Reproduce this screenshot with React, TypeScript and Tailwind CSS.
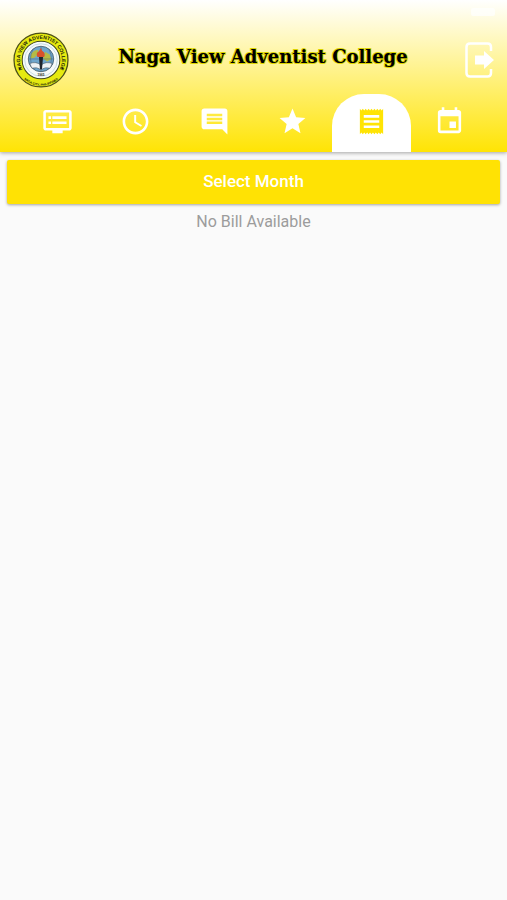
import React from 'react';
import { MdAccessTime, MdComment, MdDvr, MdEvent, MdStar } from 'react-icons/md';

const tabs = [
  { id: 'news', label: 'News', icon: MdDvr },
  { id: 'attendance', label: 'Attendance', icon: MdAccessTime },
  { id: 'messages', label: 'Messages', icon: MdComment },
  { id: 'grades', label: 'Grades', icon: MdStar },
  { id: 'billing', label: 'Billing', icon: BillIcon },
  { id: 'calendar', label: 'Calendar', icon: MdEvent },
];

function BillIcon({ className }: { className?: string }) {
  return (
    <svg viewBox="0 0 24 24" className={className} fill="currentColor" aria-hidden="true">
      <path
        fillRule="evenodd"
        d="M3 2.200l1.125 1.300 1.125-1.300 1.125 1.300 1.125-1.300 1.125 1.300 1.125-1.300 1.125 1.300 1.125-1.300 1.125 1.300 1.125-1.300 1.125 1.300 1.125-1.300 1.125 1.300 1.125-1.300 1.125 1.300L21 2.200v19.600l-1.125-1.300-1.125 1.300-1.125-1.300-1.125 1.300-1.125-1.300-1.125 1.300-1.125-1.300-1.125 1.300-1.125-1.300-1.125 1.300-1.125-1.300-1.125 1.300-1.125-1.300-1.125 1.300-1.125-1.300L3 21.800zM6 7v2h12V7zM6 11v2h12v-2zM6 15v2h12v-2z"
      />
    </svg>
  );
}

function SchoolSeal() {
  return (
    <svg viewBox="0 0 110 110" className="h-14 w-14 shrink-0" aria-hidden="true">
      <defs>
        <path id="seal-top" d="M21.600 78.400A41 41 0 1 1 88.400 78.400" />
        <path id="seal-bottom" d="M12 81A50 50 0 0 0 98 81" />
      </defs>
      <circle cx="55" cy="55" r="53" fill="#e6ea10" stroke="#4d5018" strokeWidth="2.500" />
      <circle cx="55" cy="55" r="37" fill="#f6fafa" stroke="#41491f" strokeWidth="2" />
      <circle cx="55" cy="55" r="32" fill="none" stroke="#b9d3dd" strokeWidth="1.500" />
      <circle cx="55" cy="53" r="25" fill="#6ea6cc" stroke="#3c5260" strokeWidth="1.500" />
      <path d="M36 42q8-9 14-6l-2 9-7 6-7 1zM63 39l9 5 3 9-8 5-8-6z" fill="#b4bb45" />
      <path d="M31 53h48M55 29v48M39 35q-9 18 0 35M71 35q9 18 0 35" fill="none" stroke="#45617c" />
      <path d="M33 62q12-5 22 3 10-8 22-3l-4 9q-10-3-18 3-8-6-18-3z" fill="#eef3f5" stroke="#33424d" />
      <path d="M51 49h8l-2 24h-4z" fill="#20262e" />
      <path d="M48 49q-4-8 3-11l4-7 2 6q8 5 4 12z" fill="#d8512c" />
      <circle cx="13" cy="72" r="1.800" fill="#1c1d08" />
      <circle cx="97" cy="72" r="1.800" fill="#1c1d08" />
      <g fill="#1c1d08" fontFamily="Liberation Sans" fontWeight="bold" textAnchor="middle">
        <text fontSize="10">
          <textPath href="#seal-top" startOffset="50%">NAGA VIEW ADVENTIST COLLEGE</textPath>
        </text>
        <text fontSize="6">
          <textPath href="#seal-bottom" startOffset="50%">NAGA CITY, PHILIPPINES</textPath>
        </text>
        <text x="55" y="86" fontSize="6">1965</text>
      </g>
    </svg>
  );
}

function LogoutIcon() {
  return (
    <svg viewBox="0 0 30 36" className="h-9 w-[30px]" fill="none" aria-hidden="true">
      <path
        d="M26 9V5q0-3.500-3.500-3.500H5Q1.500 1.500 1.500 5v26q0 3.500 3.500 3.500h17.500q3.500 0 3.500-3.500v-4"
        stroke="white"
        strokeWidth="2.500"
      />
      <path d="M10 13.500h9V9l10 9-10 9v-4.500h-9z" fill="white" />
    </svg>
  );
}

export default function App() {
  const [activeTab, setActiveTab] = React.useState('billing');

  return (
    <div className="min-h-screen bg-[#fafafa] font-['Roboto',sans-serif]">
      <header className="relative bg-linear-to-b/srgb from-white to-[#ffe404] shadow-[0_1px_4px_rgba(0,0,0,0.35)]">
        <div className="flex h-8 items-start justify-end pt-2 pr-3">
          <span className="h-2 w-6 rounded-xs bg-white/70" />
        </div>

        <div className="flex items-center pr-3 pl-[13px]">
          <SchoolSeal />
          <h1 className="flex-1 pr-2 pb-1.5 text-center font-['DejaVu_Serif',serif] text-lg font-bold text-black [-webkit-text-stroke:2px_#dcd400] [paint-order:stroke_fill]">
            Naga View Adventist College
          </h1>
          <button type="button" aria-label="Log out">
            <LogoutIcon />
          </button>
        </div>

        <nav className="mt-1.5 flex px-[18px]">
          {tabs.map(({ id, label, icon: Icon }) => (
            <button
              key={id}
              type="button"
              aria-label={label}
              aria-pressed={activeTab === id}
              onClick={() => setActiveTab(id)}
              className={`flex h-[58px] flex-1 items-center justify-center rounded-t-[32px] pb-1 ${
                activeTab === id ? 'bg-white text-[#ffe404]' : 'text-white'
              }`}
            >
              <Icon className="h-[31px] w-[31px]" />
            </button>
          ))}
        </nav>
      </header>

      <main className="px-[7px] pt-2">
        <button
          type="button"
          className="h-11 w-full rounded-xs bg-[#ffe204] text-[17px] font-medium text-white shadow-[0_1px_3px_rgba(0,0,0,0.35)]"
        >
          Select Month
        </button>
        <p className="mt-1.5 text-center text-base leading-6 text-[#9c9c9c]">No Bill Available</p>
      </main>
    </div>
  );
}
